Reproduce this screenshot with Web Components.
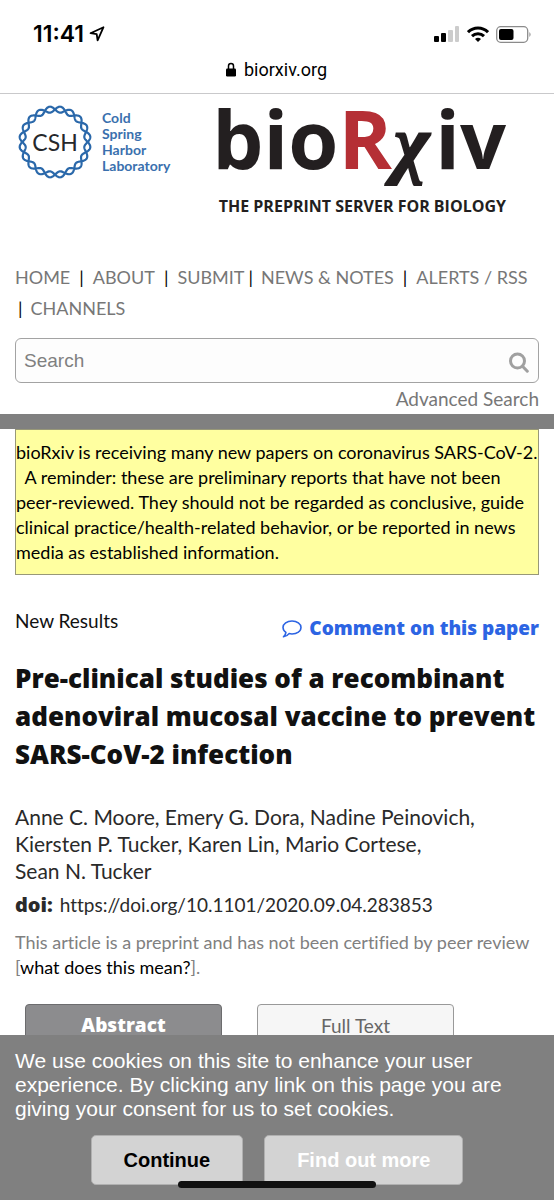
<!DOCTYPE html>
<html lang="en">
<head>
<meta charset="utf-8">
<meta name="viewport" content="width=device-width, initial-scale=1">
<title>bioRxiv</title>
<style>
body { margin: 0; background: #fff; color: #000; font: 18px/25px Lato, "Open Sans", sans-serif; font-variant-ligatures: none; }
</style>
</head>
<body>
<preprint-page></preprint-page>
<script>
const define = (name, markup, setup) => {
  customElements.define(name, class extends HTMLElement {
    connectedCallback() {
      if (this.shadowRoot) return;
      const t = document.createElement('template');
      t.innerHTML = markup;
      this.attachShadow({ mode: 'open' }).append(t.content.cloneNode(true));
      if (setup) setup(this.shadowRoot, this);
    }
  });
};

define('phone-status', `
<style>
:host { display: block; border-bottom: 1px solid #c9c9cb; padding: 20px 22px 12px 33px; }
.row { display: flex; align-items: center; justify-content: space-between; height: 28px; }
.time, .signals { display: flex; align-items: center; }
.time { gap: 5px; font: 600 23px/28px Inter, sans-serif; }
.signals { gap: 7px; }
.url { display: flex; justify-content: center; align-items: center; gap: 8px; margin: 10px 12px 0 0; font: 18px/23px Roboto, sans-serif; }
svg { display: block; }
</style>
<div class="row">
  <div class="time"><span>11:41</span>
    <svg width="16" height="16" viewBox="0 0 16 16" fill="none" stroke="#000" stroke-width="1.8" stroke-linejoin="round"><path d="M14.5 1.2 1.5 7.2l6.2.9.9 6.3z"/></svg>
  </div>
  <div class="signals">
    <svg width="26" height="16" viewBox="0 0 26 16"><rect y="10" width="5" height="6" rx="1"/><rect x="7" y="7" width="5" height="9" rx="1"/><rect x="14" y="4" width="5" height="12" rx="1" fill="#ccc"/><rect x="21" width="4" height="16" rx="1" fill="#ccc"/></svg>
    <svg width="22" height="16" viewBox="0 0 22 16" fill="none" stroke="#000" stroke-width="3"><path d="M1 6.2c5.6-5.600 14.400-5.600 20 0M5 10.100c3.400-3.300 8.600-3.300 12 0"/><path d="M8 13q3-2.600 6 0l-3 3z" fill="#000" stroke="none"/></svg>
    <svg width="36" height="17" viewBox="0 0 36 17"><rect x=".7" y=".7" width="31" height="15.600" rx="4" fill="none" stroke="#8b8b8b" stroke-width="1.300"/><rect x="3" y="3" width="14.500" height="11" rx="2"/><path d="M33.500 6v5q2-2.500 0-5" fill="#777"/></svg>
  </div>
</div>
<div class="url"><svg width="10" height="15" viewBox="0 0 10 15"><path d="M2.500 7V4a2.500 2.500 0 0 1 5 0v3" fill="none" stroke="#000" stroke-width="1.500"/><rect y="6.500" width="10" height="8" rx="1.200"/></svg><span>biorxiv.org</span></div>
`);

define('csh-logo', `
<style>
:host { display: block; }
a { display: flex; align-items: center; gap: 10px; color: #3a70ae; text-decoration: none; font: 700 14px/16px Lato, sans-serif; }
.ring { display: grid; place-items: center; }
.ring > * { grid-area: 1 / 1; }
.ring span { color: #26282c; font: 400 23px/30px Lato, sans-serif; }
svg { display: block; }
</style>
<a href="#"><span class="ring"><svg width="74" height="74" viewBox="-37 -37 74 74" fill="none" stroke="#2a68aa" stroke-width="2.2"><path/><path/></svg><span>CSH</span></span>
<span>Cold<br>Spring<br>Harbor<br>Laboratory</span></a>
`, root => {
  // Two strands winding round a circle, half a turn out of phase.
  root.querySelectorAll('path').forEach((p, k) => {
    let d = '';
    for (let i = 0; i < 360; i++) {
      const a = i * Math.PI / 180;
      const r = 32.7 + (k ? -3 : 3) * Math.sin(10 * a);
      d += (i ? 'L' : 'M') + (r * Math.cos(a)).toFixed(2) + ' ' + (r * Math.sin(a)).toFixed(2);
    }
    p.setAttribute('d', d + 'Z');
  });
});

define('biorxiv-logo', `
<style>
:host { display: block; color: #231f20; }
a { display: flex; flex-direction: column; align-items: flex-end; color: inherit; text-decoration: none; }
.name { font: 700 81px/66px "Open Sans", sans-serif; }
.r { color: #b52f35; }
.x { margin: 0 6px 0 2px; font: italic 700 76px/66px "Liberation Serif", serif; -webkit-text-stroke: 2px #231f20; }
.tag { margin-top: 21px; font: 700 16px/18px "Open Sans", sans-serif; }
</style>
<a href="#"><span class="name">bio<span class="r">R</span><span class="x">χ</span>iv</span><span class="tag">THE PREPRINT SERVER FOR BIOLOGY</span></a>
`);

define('site-nav', `
<style>
:host { display: block; font-size: 18px; line-height: 31px; }
a { color: #777; text-decoration: none; }
.wide { margin: 0 9px; }
.tight { margin: 0 8px 0 4px; }
.first { margin: 0 8px 0 3px; }
</style>
<nav><a href="#">HOME</a><span class="wide">|</span><a href="#">ABOUT</a><span class="wide">|</span><a href="#">SUBMIT</a><span class="tight">|</span><a href="#">NEWS &amp; NOTES</a><span class="wide">|</span><a href="#">ALERTS / RSS</a><br><span class="first">|</span><a href="#">CHANNELS</a></nav>
`);

define('site-search', `
<style>
:host { display: block; }
form { display: flex; align-items: center; box-sizing: border-box; height: 45px; padding: 0 9px 0 8px; border: 1px solid #a3a3a3; border-radius: 6px; background: #fdfdfd; }
input { flex: 1; min-width: 0; border: 0; padding: 0; background: none; outline: 0; font: 19px/24px "Liberation Sans", sans-serif; }
input::placeholder { color: #808080; opacity: 1; }
button { border: 0; padding: 4px 0 0; background: none; }
svg { display: block; }
.more { display: block; text-align: right; font-size: 19px; line-height: 31px; color: #777; text-decoration: none; }
</style>
<form><input type="search" placeholder="Search" aria-label="Search"><button type="button" aria-label="Submit search"><svg width="20" height="21" viewBox="0 0 20 21" fill="none" stroke="#a0a0a0" stroke-width="3"><circle cx="8.500" cy="9" r="7"/><path d="M13.500 14.200l4.800 5" stroke-linecap="round"/></svg></button></form>
<a class="more" href="#">Advanced Search</a>
`);

define('site-header', `
<style>
:host { display: block; padding: 0 15px; border-bottom: 15px solid #808080; }
.logos { display: flex; justify-content: space-between; align-items: flex-start; padding: 11px 33px 0 3px; height: 157px; }
site-search { margin-top: 14px; }
</style>
<div class="logos"><csh-logo></csh-logo><biorxiv-logo></biorxiv-logo></div>
<site-nav></site-nav>
<site-search></site-search>
`);

define('site-notice', `
<style>
:host { display: block; margin: 0 15px; padding: 10px 0 9px; border: 1px solid #989878; background: #ffffa0; white-space: nowrap; }
</style>
<slot></slot>
`);

define('article-head', `
<style>
:host { display: block; padding: 0 15px; color: #2a2a2a; }
.kind { display: flex; justify-content: space-between; color: #111; font-size: 19px; line-height: 25px; }
.kind a { display: flex; align-items: center; gap: 7px; margin-top: 8px; color: #2c64e3; font-family: "Open Sans", sans-serif; font-weight: 800; text-decoration: none; }
h1 { margin: 18px 0 0; color: #111; font: 800 26px/38px "Open Sans", sans-serif; }
.authors { margin-top: 30px; font-size: 21px; line-height: 27px; }
.doi { margin-top: 7px; font-size: 19px; line-height: 27px; }
.doi b { margin-right: 2px; font: 800 20px/27px "Open Sans", sans-serif; }
.note { margin-top: 12px; color: #808080; font-size: 18px; line-height: 25px; }
.note a { color: #000; text-decoration: none; }
svg { display: block; }
p { margin: 0; }
</style>
<div class="kind"><span>New Results</span><a href="#"><svg width="20" height="18" viewBox="0 0 20 18" fill="none" stroke="#2c64e3" stroke-width="1.600" stroke-linejoin="round"><path d="M10 1c5 0 9 2.800 9 6.500S15 14 10 14q-1.600 0-3-.4Q5 16.400 1.500 16.800 3.800 14.800 3.900 12.400 1 10.400 1 7.500C1 3.800 5 1 10 1z"/></svg>Comment on this paper</a></div>
<h1>Pre-clinical studies of a recombinant<br>adenoviral mucosal vaccine to prevent<br>SARS-CoV-2 infection</h1>
<p class="authors">Anne C. Moore, Emery G. Dora, Nadine Peinovich,<br>Kiersten P. Tucker, Karen Lin, Mario Cortese,<br>Sean N. Tucker</p>
<p class="doi"><b>doi:</b> https://doi.org/10.1101/2020.09.04.283853</p>
<p class="note">This article is a preprint and has not been certified by peer review<br>[<a href="#">what does this mean?</a>].</p>
`);

define('view-tabs', `
<style>
:host { display: flex; gap: 35px; padding: 0 25px; }
a { box-sizing: border-box; flex: 0 0 197px; height: 50px; border: 1px solid #999; border-radius: 4px 4px 0 0; background: #f6f6f6; color: #666; font-size: 19px; line-height: 41px; text-align: center; text-decoration: none; }
a[aria-current] { border-color: #6c6c6e; background: #8c8c8e; color: #fff; font-family: "Open Sans", sans-serif; font-weight: 800; }
</style>
<a href="#" aria-current="page">Abstract</a><a href="#">Full Text</a>
`);

define('cookie-bar', `
<style>
:host { position: fixed; left: 0; right: 0; bottom: 0; display: block; padding: 14px 15px 15px; background: #808080; color: #fff; font: 21px/24px "Liberation Sans", sans-serif; }
p { margin: 0; }
.actions { display: flex; gap: 21px; justify-content: center; margin-top: 14px; }
button { box-sizing: border-box; height: 50px; padding: 0 32px; border: 1px solid #b0b0b0; border-radius: 5px; background: #d3d3d3; font: 700 20px/24px "Liberation Sans", sans-serif; color: #000; }
.quiet { color: #fff; }
.home { position: absolute; left: 0; right: 0; bottom: 12px; width: 198px; height: 7px; margin: 0 auto; border-radius: 4px; background: #111; }
</style>
<p>We use cookies on this site to enhance your user<br>experience. By clicking any link on this page you are<br>giving your consent for us to set cookies.</p>
<div class="actions"><button type="button">Continue</button><button type="button" class="quiet">Find out more</button></div>
<div class="home"></div>
`);

define('preprint-page', `
<style>
:host { display: block; }
article-head { margin-top: 33px; }
view-tabs { margin-top: 24px; }
</style>
<phone-status></phone-status>
<site-header></site-header>
<main>
<site-notice>bioRxiv is receiving many new papers on coronavirus SARS-CoV-2.<br>&nbsp; A reminder: these are preliminary reports that have not been<br>peer-reviewed. They should not be regarded as conclusive, guide<br>clinical practice/health-related behavior, or be reported in news<br>media as established information.</site-notice>
<article-head></article-head>
<view-tabs></view-tabs>
</main>
<cookie-bar></cookie-bar>
`);
</script>
</body>
</html>
